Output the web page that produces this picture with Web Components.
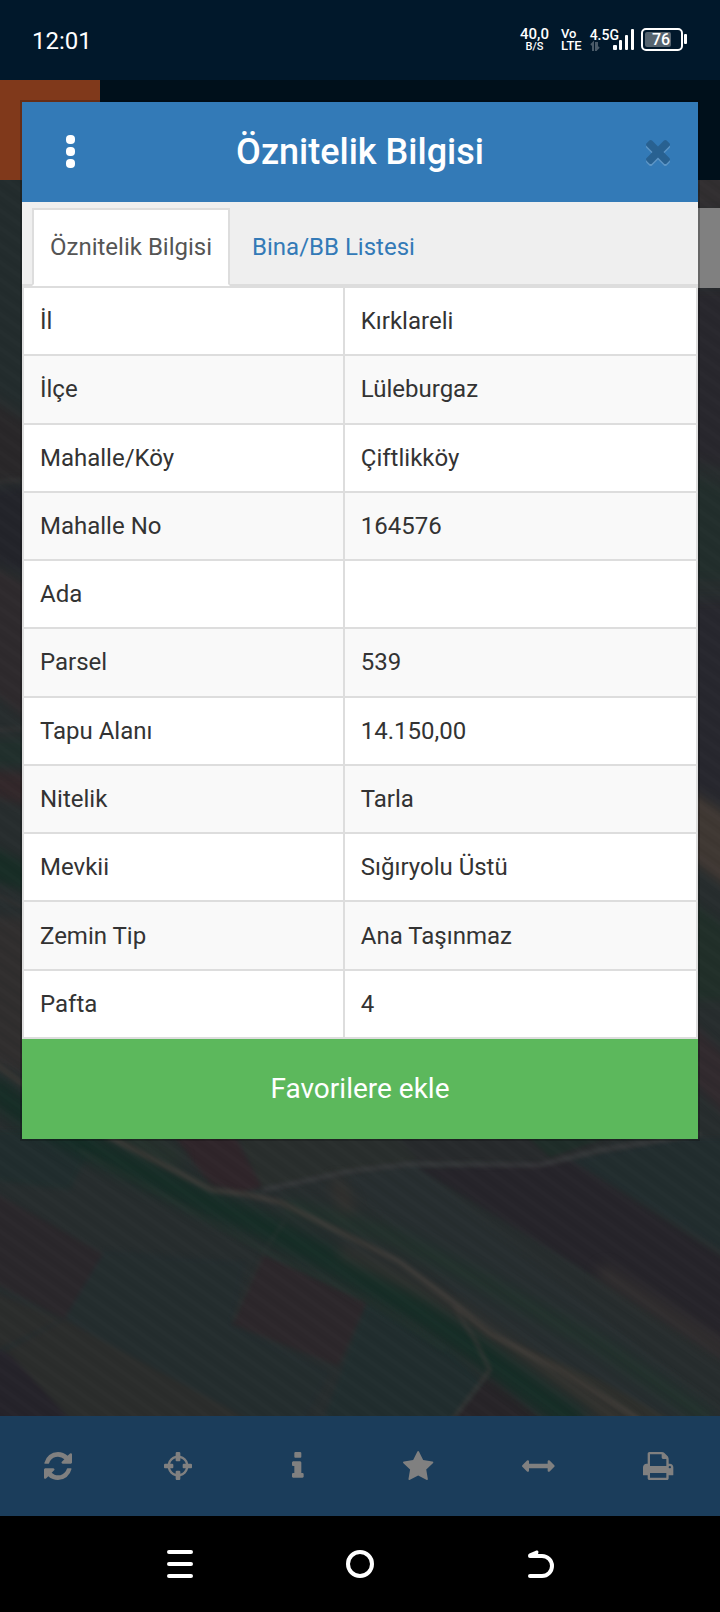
<!DOCTYPE html>
<html lang="tr">
<head>
<meta charset="utf-8">
<meta name="viewport" content="width=device-width, initial-scale=1">
<title>Öznitelik Bilgisi</title>
<style>
  html, body { margin: 0; }
  body { font-family: Roboto, "Noto Sans", sans-serif; background: #000; color: #333; }
</style>
</head>
<body>
<parcel-app></parcel-app>

<template id="t-app">
  <style>
    :host { display: flex; flex-direction: column; min-height: 100vh; position: relative; }
    field-map { flex: 1; }
    info-dialog { position: absolute; top: 100px; left: 20px; right: 20px; }
  </style>
  <status-bar></status-bar>
  <app-header></app-header>
  <field-map></field-map>
  <map-toolbar></map-toolbar>
  <system-nav></system-nav>
  <info-dialog heading="Öznitelik Bilgisi">
    <tab-strip slot="tabs"></tab-strip>
    <attribute-table></attribute-table>
    <span slot="action">Favorilere ekle</span>
  </info-dialog>
</template>

<template id="t-status">
  <style>
    :host { display: flex; align-items: center; justify-content: space-between; height: 80px;
      padding: 0 32px; box-sizing: border-box; background: #01182b; color: #fff; }
    .clock { font-size: 24px; line-height: 28px; padding-top: 2px; }
    .right { display: flex; align-items: center; font-weight: 500; }
    .stack { display: flex; flex-direction: column; }
    .rate { align-items: center; font-size: 15px; line-height: 13px; margin-right: 12px; }
    .rate small { font-size: 11px; line-height: 11px; }
    .volte { font-size: 13px; line-height: 12px; margin-right: 8px; }
    .net { display: flex; align-items: flex-start; margin-right: 6px; }
    .gen { font-size: 14px; line-height: 12px; }
    svg { display: block; }
    .bars { margin-left: -6px; }
    .battery { position: relative; }
    .battery span { position: absolute; left: 0; width: 40px; top: 0; line-height: 24px; text-align: center; font-size: 16px; }
  </style>
  <span class="clock">12:01</span>
  <div class="right">
    <div class="stack rate"><span>40,0</span><small>B/S</small></div>
    <div class="stack volte"><span>Vo</span><span>LTE</span></div>
    <div class="net">
      <div class="stack"><span class="gen">4.5G</span>
        <svg width="12" height="11" viewBox="0 0 12 11" fill="none" stroke="#4a5a68" stroke-width="2"><path d="M1 4l2-2v8M6 1v9M6 9l3-3M7 1v6"/></svg>
      </div>
      <svg class="bars" width="22" height="22" viewBox="0 0 22 22" fill="#fff"><rect y="16" width="4" height="5" rx="1"/><rect x="6" y="11" width="3" height="10" rx="1"/><rect x="12" y="6" width="3" height="15" rx="1"/><rect x="18" y="0" width="3" height="21" rx="1"/></svg>
    </div>
    <div class="battery">
      <svg width="47" height="24" viewBox="0 0 47 24"><rect x="1" y="1" width="40" height="21" rx="4" fill="none" stroke="#fff" stroke-width="2"/><rect x="4" y="4" width="26" height="15" rx="2" fill="#56646f"/><rect x="43" y="6" width="3" height="10" rx="1" fill="#fff"/></svg>
      <span>76</span>
    </div>
  </div>
</template>

<template id="t-header">
  <style>
    :host { display: flex; height: 100px; background: #00101b; }
    button { width: 100px; border: 0; background: #80391b; }
  </style>
  <button type="button" aria-label="Menü"></button>
</template>

<template id="t-map">
  <style>
    :host { display: block; position: relative; overflow: hidden; background: #262c2d; }
    svg { position: absolute; inset: 0; width: 100%; height: 100%; }
    .panel { position: absolute; right: 0; top: 28px; width: 40px; height: 80px; background: #808080; }
  </style>
  <svg viewBox="0 180 720 1236" preserveAspectRatio="xMidYMid slice" aria-hidden="true" color-interpolation-filters="sRGB">
    <defs>
      <pattern id="rows" width="14" height="14" patternUnits="userSpaceOnUse" patternTransform="rotate(36)">
        <rect width="14" height="4" fill="#fff" opacity=".008"/><rect y="8" width="14" height="3" fill="#000" opacity=".03"/>
      </pattern>
      <filter id="soft" x="-5%" y="-5%" width="110%" height="110%"><feGaussianBlur stdDeviation="2"/></filter>
      <filter id="fields" x="-5%" y="-5%" width="110%" height="110%"><feGaussianBlur stdDeviation="4"/></filter>
      <filter id="wide" x="-20%" y="-20%" width="140%" height="140%"><feGaussianBlur stdDeviation="7"/></filter>
    </defs>
    <rect x="-10" y="170" width="740" height="1260" fill="#272d2e"/>
    <g filter="url(#fields)" opacity=".85">
      <!-- left margin fields -->
      <path d="M-10 170H40V420L-10 390Z" fill="#232c2d"/>
      <path d="M-10 400L40 430V480L-10 482Z" fill="#2a2729"/>
      <path d="M-10 490L40 485V580L-10 560Z" fill="#23232a"/>
      <path d="M-10 565L40 590V730L-10 690Z" fill="#302a2d"/>
      <path d="M-10 740H40V765H-10Z" fill="#20302c"/>
      <path d="M-10 770L40 775V810L-10 795Z" fill="#34272a"/>
      <path d="M-10 845L40 870V895L-10 880Z" fill="#162d25"/>
      <path d="M-10 915L40 920V1080L-10 1060Z" fill="#322f2f"/>
      <!-- right margin fields -->
      <path d="M690 170H730V210H690Z" fill="#332f31"/>
      <path d="M690 288H730V470L690 460Z" fill="#29272d"/>
      <path d="M690 475L730 490V580H690Z" fill="#222f2c"/>
      <path d="M690 600H730V810L690 790Z" fill="#28272e"/>
      <path d="M690 790L730 815V890L690 860Z" fill="#443a35"/>
      <path d="M690 900L730 930V1000H690Z" fill="#203029"/>
      <path d="M690 1020L730 1060V1120L690 1080Z" fill="#332a2e"/>
    </g>
    <g filter="url(#soft)" opacity=".9">
      <path d="M-10 482L40 478M-10 730L40 728M-10 892L40 915" stroke="#3a3838" stroke-width="2"/>
      <!-- lower fields -->
      <path d="M-10 1130H100L70 1190L-10 1180Z" fill="#212e2e"/>
      <path d="M-10 1190L105 1255L65 1320L-10 1280Z" fill="#2b272b"/>
      <path d="M-10 1290L60 1320L-10 1352Z" fill="#2c2d2c"/>
      <path d="M105 1250L245 1262L232 1325L330 1372L300 1430H240L65 1318Z" fill="#242d2f"/>
      <path d="M0 1355L65 1320L260 1425H50Z" fill="#2c2d2c"/>
      <path d="M-10 1345L10 1355L75 1425H-10Z" fill="#25222a"/>
      <path d="M262 1254L367 1302L338 1366L232 1324Z" fill="#2d272b"/>
      <path d="M367 1302L445 1345L485 1385L450 1430H320Z" fill="#212e2f"/>
      <path d="M170 1130L232 1130L262 1187L240 1193L212 1187Z" fill="#30252a"/>
      <path d="M236 1130H390L420 1160L350 1170L262 1187Z" fill="#2a2f2d"/>
      <path d="M390 1130H640L560 1160L420 1163Z" fill="#282a2c"/>
      <path d="M520 1130H630L550 1157Z" fill="#1f2e29"/>
      <path d="M345 1178L415 1165L730 1420H650L500 1340Z" fill="#282f31"/>
      <path d="M418 1168L570 1160L730 1262V1365L600 1280Z" fill="#26242a"/>
      <path d="M572 1160L680 1138H730V1255Z" fill="#222d2f"/>
      <path d="M490 1375L555 1430H445Z" fill="#282428"/>
      <path d="M485 1330L600 1380L690 1430H620Z" fill="#2f312d"/>
    </g>
    <g filter="url(#wide)" fill="none" opacity=".85">
      <path d="M-10 1085L20 1110L80 1142L210 1204L262 1225L340 1265L420 1312L480 1352L580 1425" stroke="#132d25" stroke-width="26"/>
      <path d="M285 1205L390 1235L480 1280L600 1345L710 1420" stroke="#20332b" stroke-width="14"/>
      <path d="M118 1130L180 1160" stroke="#26352c" stroke-width="12"/>
      <path d="M340 1250L460 1310L560 1380L630 1425" stroke="#343330" stroke-width="12"/>
      <path d="M600 1270L730 1355" stroke="#373432" stroke-width="14"/>
      <path d="M335 1180L350 1212" stroke="#38332f" stroke-width="12"/>
    </g>
    <g fill="none" stroke-linejoin="round" filter="url(#soft)" opacity=".8">
      <path d="M-10 1060L20 1082L110 1137L212 1190L245 1194L280 1202L340 1232L400 1262L450 1300L490 1334L560 1370L640 1420" stroke="#423e3a" stroke-width="5"/>
      <path d="M262 1190L300 1182L350 1171L410 1164L540 1165L600 1150L700 1134" stroke="#3d3e40" stroke-width="4"/>
      <path d="M450 1300L475 1340L490 1370L452 1420" stroke="#3d3a38" stroke-width="3"/>
      <path d="M80 1150L262 1250L367 1300L445 1350" stroke="#25352f" stroke-width="3"/>
      <path d="M285 1220L265 1250L232 1322" stroke="#2b3432" stroke-width="2"/>
    </g>
    <rect x="-10" y="170" width="740" height="1260" fill="url(#rows)"/>
  </svg>
  <div class="panel"></div>
</template>

<template id="t-toolbar">
  <style>
    :host { display: grid; grid-template-columns: repeat(6, 1fr); height: 100px; background: #1b3d5b; }
    button { display: flex; align-items: center; justify-content: center; border: 0; padding: 0 4px 0 0; background: none; color: #808080; }
    svg { display: block; height: 28px; overflow: visible; fill: currentColor; }
  </style>
  <button type="button" aria-label="Yenile"><svg viewBox="0 0 1536 1536"><path d="M1511 928q0 5-1 7-64 268-268 434.500t-478 166.500q-146 0-282.500-55t-243.500-157l-129 129q-19 19-45 19t-45-19-19-45v-448q0-26 19-45t45-19h448q26 0 45 19t19 45-19 45l-137 137q71 66 161 102t187 36q134 0 250-65t186-179q11-17 53-117 8-23 30-23h192q13 0 22.500 9.500t9.500 22.500zm25-800v448q0 26-19 45t-45 19h-448q-26 0-45-19t-19-45 19-45l138-138q-148-137-349-137-134 0-250 65t-186 179q-11 17-53 117-8 23-30 23h-199q-13 0-22.500-9.500t-9.500-22.500v-7q65-268 270-434.500t480-166.500q146 0 284 55.500t245 156.500l130-129q19-19 45-19t45 19 19 45z"/></svg></button>
  <button type="button" aria-label="Konum"><svg viewBox="0 0 1536 1536"><path d="M1197 896h-109q-26 0-45-19t-19-45v-128q0-26 19-45t45-19h109q-32-108-112.500-188.500t-188.500-112.500v109q0 26-19 45t-45 19h-128q-26 0-45-19t-19-45v-109q-108 32-188.500 112.500t-112.500 188.500h109q26 0 45 19t19 45v128q0 26-19 45t-45 19h-109q32 108 112.500 188.500t188.500 112.500v-109q0-26 19-45t45-19h128q26 0 45 19t19 45v109q108-32 188.500-112.500t112.500-188.500zm339-192v128q0 26-19 45t-45 19h-143q-37 161-154.500 278.500t-278.500 154.500v143q0 26-19 45t-45 19h-128q-26 0-45-19t-19-45v-143q-161-37-278.500-154.500t-154.500-278.500h-143q-26 0-45-19t-19-45v-128q0-26 19-45t45-19h143q37-161 154.500-278.500t278.500-154.500v-143q0-26 19-45t45-19h128q26 0 45 19t19 45v143q161 37 278.500 154.500t154.500 278.500h143q26 0 45 19t19 45z"/></svg></button>
  <button type="button" aria-label="Bilgi"><svg viewBox="0 128 640 1536"><path d="M640 1344v128q0 26-19 45t-45 19h-512q-26 0-45-19t-19-45v-128q0-26 19-45t45-19h64v-384h-64q-26 0-45-19t-19-45v-128q0-26 19-45t45-19h384q26 0 45 19t19 45v576h64q26 0 45 19t19 45zm-128-1152v192q0 26-19 45t-45 19h-256q-26 0-45-19t-19-45v-192q0-26 19-45t45-19h256q26 0 45 19t19 45z"/></svg></button>
  <button type="button" aria-label="Favoriler"><svg viewBox="0 51 1664 1536"><path d="M1664 615q0 22-26 48l-363 354 86 500q1 7 1 20 0 21-10.500 35.500t-30.500 14.500q-19 0-40-12l-449-236-449 236q-22 12-40 12-21 0-31.500-14.500t-10.500-35.500q0-6 2-20l86-500-364-354q-25-27-25-48 0-37 56-46l502-73 225-455q19-41 49-41t49 41l225 455 502 73q56 9 56 46z"/></svg></button>
  <button type="button" aria-label="Ölçüm"><svg viewBox="0 -64 1792 1536"><path d="M1792 704q0 26-19 45l-256 256q-19 19-45 19t-45-19-19-45v-128h-1024v128q0 26-19 45t-45 19-45-19l-256-256q-19-19-19-45t19-45l256-256q19-19 45-19t45 19 19 45v128h1024v-128q0-26 19-45t45-19 45 19l256 256q19 19 19 45z"/></svg></button>
  <button type="button" aria-label="Yazdır"><svg viewBox="0 0 1664 1536"><path d="M384 1408h896v-256h-896v256zm0-640h896v-384h-160q-40 0-68-28t-28-68v-160h-640v640zm1152 64q0-26-19-45t-45-19-45 19-19 45 19 45 45 19 45-19 19-45zm128 0v416q0 13-9.500 22.500t-22.500 9.500h-224v160q0 40-28 68t-68 28h-960q-40 0-68-28t-28-68v-160h-224q-13 0-22.500-9.500t-9.500-22.500v-416q0-79 56.500-135.500t135.500-56.500h64v-544q0-40 28-68t68-28h672q40 0 88 20t76 48l152 152q28 28 48 76t20 88v256h64q79 0 135.500 56.500t56.500 135.500z"/></svg></button>
</template>

<template id="t-nav">
  <style>
    :host { display: grid; grid-template-columns: repeat(3, 25%); justify-content: center; height: 96px; background: #000; }
    button { display: flex; align-items: center; justify-content: center; border: 0; padding: 0; background: none; }
    svg { display: block; fill: none; stroke: #fff; stroke-width: 4; stroke-linecap: round; stroke-linejoin: round; }
  </style>
  <button type="button" aria-label="Son uygulamalar"><svg width="28" height="28"><path d="M3 2H25M3 14H25M3 26H25"/></svg></button>
  <button type="button" aria-label="Ana ekran"><svg width="28" height="28"><circle cx="14" cy="14" r="12"/></svg></button>
  <button type="button" aria-label="Geri"><svg width="28" height="28"><path d="M4 26H16A10 10 0 0 0 16 6H4"/><path d="M4 5L11 2L10 6Z" stroke-width="3" fill="#fff"/></svg></button>
</template>

<template id="t-dialog">
  <style>
    :host { display: block; border: 2px solid rgba(0,0,0,.2); background: #fff; background-clip: padding-box; box-sizing: border-box; }
    header { display: grid; grid-template-columns: 100px 1fr 100px; align-items: center; height: 100px; background: #337ab7; color: #fff; }
    h1 { margin: 0; font-size: 36px; line-height: 40px; font-weight: 500; text-align: center; }
    header button { height: 100px; border: 0; padding: 0; background: none; display: flex; align-items: center; justify-content: center; }
    .menu { padding-right: 2px; }
    .close { padding-left: 20px; opacity: .2; filter: drop-shadow(0 2px 0 #fff); }
    svg { display: block; }
    .action { display: block; width: 100%; height: 100px; border: 0; background: #5cb85c; color: #fff; font: 400 28px/36px Roboto, "Noto Sans", sans-serif; }
  </style>
  <header>
    <button type="button" class="menu" aria-label="Seçenekler"><svg width="10" height="34" fill="#fff"><rect y="0" width="9" height="9" rx="4"/><rect y="12" width="9" height="9" rx="4"/><rect y="24" width="9" height="9" rx="4"/></svg></button>
    <h1></h1>
    <button type="button" class="close" aria-label="Kapat"><svg width="24" height="24" viewBox="302 366 1188 1188"><path d="M1490 1322q0 40-28 68l-136 136q-28 28-68 28t-68-28l-294-294-294 294q-28 28-68 28t-68-28l-136-136q-28-28-28-68t28-68l294-294-294-294q-28-28-28-68t28-68l136-136q28-28 68-28t68 28l294 294 294-294q28-28 68-28t68 28l136 136q28 28 28 68t-28 68l-294 294 294 294q28 28 28 68z"/></svg></button>
  </header>
  <slot name="tabs"></slot>
  <slot></slot>
  <button type="button" class="action"><slot name="action"></slot></button>
</template>

<template id="t-tabs">
  <style>
    :host { display: flex; gap: 4px; padding: 6px 10px 0; background: #efefef; border-bottom: 2px solid #ddd; }
    a { box-sizing: border-box; height: 78px; margin-bottom: -2px; padding: 20px 16px; border: 2px solid transparent;
      font-size: 24px; line-height: 34px; color: #337ab7; text-decoration: none; white-space: nowrap; }
    a[aria-current] { color: #555; background: #fff; border-color: #ddd #ddd #fff; }
  </style>
  <a href="#oznitelik" aria-current="page">Öznitelik Bilgisi</a>
  <a href="#bina">Bina/BB Listesi</a>
</template>

<template id="t-table">
  <style>
    :host { display: block; }
    table { width: 100%; height: 753px; border-collapse: collapse; table-layout: fixed; font-size: 24px; line-height: 34px; }
    .key { width: 47.6%; }
    th, td { border: 2px solid #ddd; padding: 0 16px; text-align: left; font-weight: 400; }
    tr { background: #fff; }
    tr:nth-child(even) { background: #f9f9f9; }
  </style>
  <table><colgroup><col class="key"><col></colgroup><tbody></tbody></table>
</template>

<script>
  const define = (name, id, setup) => customElements.define(name, class extends HTMLElement {
    constructor() {
      super();
      this.attachShadow({ mode: 'open' }).append(document.getElementById(id).content.cloneNode(true));
    }
    connectedCallback() { if (setup) setup(this, this.shadowRoot); }
  });
  const rows = [['İl', 'Kırklareli'], ['İlçe', 'Lüleburgaz'], ['Mahalle/Köy', 'Çiftlikköy'], ['Mahalle No', '164576'],
    ['Ada', ''], ['Parsel', '539'], ['Tapu Alanı', '14.150,00'], ['Nitelik', 'Tarla'], ['Mevkii', 'Sığıryolu Üstü'],
    ['Zemin Tip', 'Ana Taşınmaz'], ['Pafta', '4']];
  define('status-bar', 't-status');
  define('app-header', 't-header');
  define('field-map', 't-map');
  define('map-toolbar', 't-toolbar');
  define('system-nav', 't-nav');
  define('tab-strip', 't-tabs');
  define('attribute-table', 't-table', (el, root) => {
    root.querySelector('tbody').replaceChildren(...rows.map(([key, value]) => {
      const tr = document.createElement('tr');
      const th = document.createElement('th');
      const td = document.createElement('td');
      th.scope = 'row';
      th.textContent = key;
      td.textContent = value;
      tr.append(th, td);
      return tr;
    }));
  });
  define('info-dialog', 't-dialog', (el, root) => {
    el.setAttribute('role', 'dialog');
    root.querySelector('h1').textContent = el.getAttribute('heading');
  });
  define('parcel-app', 't-app');
</script>
</body>
</html>
